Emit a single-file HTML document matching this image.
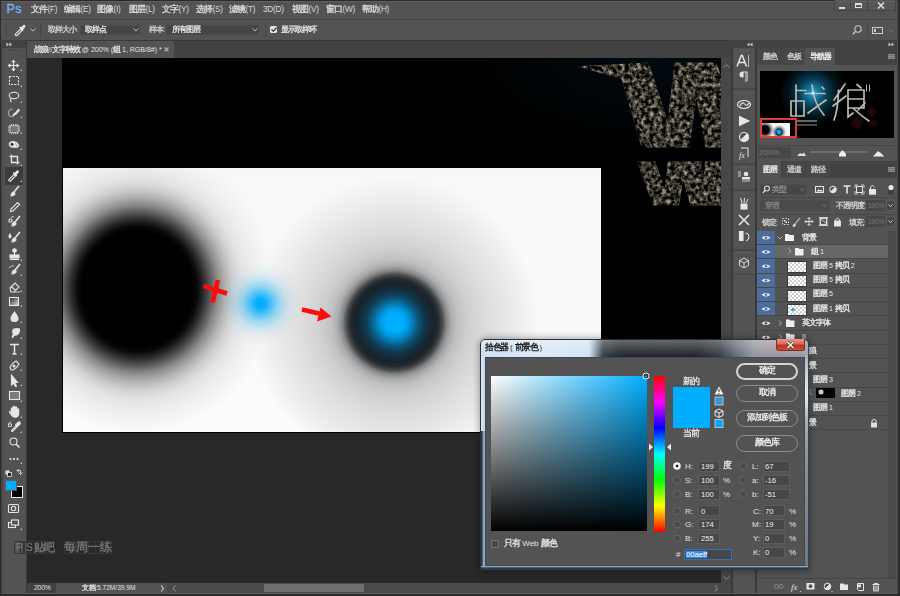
<!DOCTYPE html>
<html><head><meta charset="utf-8">
<style>
*{margin:0;padding:0;box-sizing:border-box}
html,body{width:900px;height:596px;overflow:hidden;background:#282828}
body{position:relative;font-family:"Liberation Sans",sans-serif;font-size:9px;color:#d6d6d6}
.a{position:absolute}
.t{position:absolute;white-space:nowrap;line-height:1}
.m{top:6px;font-size:8.2px;color:#dadada;letter-spacing:-0.2px}
.o{font-size:7px;color:#cfcfcf}
.ig{left:733px;width:22px;background:#535353;position:absolute}
.pt{font-size:7px;color:#cfcfcf}
.lt{font-size:7px;color:#e8e8e8}
.btn{left:736px;width:62px;height:17px;border:1px solid #8c8c8c;border-radius:9px;position:absolute}
.bt{left:736px;width:62px;text-align:center;font-size:8px;color:#eee}
.dl{font-size:8px;color:#e4e4e4}
.dv{font-size:7.7px;color:#eee}
.fld{height:11px;background:#474747;border:1px solid #5c5c5c;position:absolute}
.thb{position:absolute;left:788px;width:18px;height:10px;background:repeating-conic-gradient(#cfcfcf 0 25%,#fff 0 50%) 0 0/4px 4px;outline:1px solid #3a3a3a}
.dd{background:#454545;border:1px solid #4a4a4a}
i{display:inline-block;width:1em;font-style:normal;text-align:center;-webkit-text-stroke:0.3px currentColor;transform:scale(1.12)}
</style></head><body>
<div class="a" style="left:0;top:0;width:900px;height:596px;background:#2b2b2b"></div>
<!-- ===== MENU BAR ===== -->
<div class="a" style="left:1px;top:1px;width:896px;height:18px;background:#535353"></div>
<div class="t" style="left:6.5px;top:3px;font-size:12.5px;color:#72b2ee;letter-spacing:0.3px;-webkit-text-stroke:0.35px #72b2ee">Ps</div>
<div class="t m" style="left:31px"><i>文</i><i>件</i>(F)</div>
<div class="t m" style="left:64px"><i>编</i><i>辑</i>(E)</div>
<div class="t m" style="left:97px"><i>图</i><i>像</i>(I)</div>
<div class="t m" style="left:129px"><i>图</i><i>层</i>(L)</div>
<div class="t m" style="left:162px"><i>文</i><i>字</i>(Y)</div>
<div class="t m" style="left:196px"><i>选</i><i>择</i>(S)</div>
<div class="t m" style="left:229px"><i>滤</i><i>镜</i>(T)</div>
<div class="t m" style="left:263px">3D(D)</div>
<div class="t m" style="left:292px"><i>视</i><i>图</i>(V)</div>
<div class="t m" style="left:326px"><i>窗</i><i>口</i>(W)</div>
<div class="t m" style="left:362px"><i>帮</i><i>助</i>(H)</div>
<!-- window buttons -->
<div class="a" style="left:834px;top:0;width:62px;height:11px;border:1px solid #444;border-top:none;background:#565656"></div>
<div class="a" style="left:850px;top:0;width:1px;height:11px;background:#444"></div>
<div class="a" style="left:867px;top:0;width:1px;height:11px;background:#444"></div>
<div class="a" style="left:839px;top:7px;width:6px;height:2px;background:#ddd"></div>
<div class="a" style="left:855px;top:3px;width:7px;height:5px;border:1px solid #ddd;border-top-width:2px"></div>
<svg class="a" style="left:877px;top:2px" width="8" height="7"><path d="M1 0.5L7 6.5M7 0.5L1 6.5" stroke="#ddd" stroke-width="1.6"/></svg>
<!-- ===== OPTIONS BAR ===== -->
<div class="a" style="left:1px;top:19px;width:896px;height:22px;background:#535353;border-top:1px solid #454545;border-bottom:1px solid #383838"></div>
<div class="a" style="left:1px;top:1px;width:896px;height:1px;background:#5e5e5e"></div>
<div class="a" style="left:6px;top:24px;width:1px;height:12px;background:#474747"></div>
<svg class="a" style="left:14px;top:24px" width="13" height="13" viewBox="0 0 13 13"><path d="M2.3 11.8Q1 11.5 1.3 10.2L6.5 5L8 6.5L2.8 11.7Z" fill="none" stroke="#eee" stroke-width="1.1"/><path d="M6 4.2L8.8 7L9.8 6L9 5.2L10.8 3.4Q12 2.2 11 1.2Q10 0.3 8.8 1.6L7 3.4L6.2 2.6L5.2 3.6Z" fill="#eee"/></svg>
<svg class="a" style="left:30px;top:28px" width="6" height="4"><path d="M0.5 0.5L3 3L5.5 0.5" stroke="#bbb" fill="none"/></svg>
<div class="a" style="left:40px;top:22px;width:1px;height:15px;background:#464646"></div>
<div class="t o" style="left:48px;top:26px"><i>取</i><i>样</i><i>大</i><i>小</i>:</div>
<div class="a dd" style="left:80px;top:25px;width:60px;height:10px"></div>
<div class="t o" style="left:85px;top:26px;color:#e0e0e0"><i>取</i><i>样</i><i>点</i></div>
<svg class="a" style="left:133px;top:28px" width="6" height="4"><path d="M0.5 0.5L3 3L5.5 0.5" stroke="#bbb" fill="none"/></svg>
<div class="t o" style="left:149px;top:26px"><i>样</i><i>本</i>:</div>
<div class="a dd" style="left:166px;top:25px;width:93px;height:10px"></div>
<div class="t o" style="left:172px;top:26px;color:#e0e0e0"><i>所</i><i>有</i><i>图</i><i>层</i></div>
<svg class="a" style="left:252px;top:28px" width="6" height="4"><path d="M0.5 0.5L3 3L5.5 0.5" stroke="#bbb" fill="none"/></svg>
<div class="a" style="left:265px;top:22px;width:1px;height:15px;background:#464646"></div>
<div class="a" style="left:270px;top:26px;width:7px;height:7px;background:#e8e8e8;border-radius:1.5px"></div>
<svg class="a" style="left:271px;top:27px" width="6" height="5"><path d="M0.5 2.5L2.3 4.2L5.5 0.8" stroke="#333" stroke-width="1.3" fill="none"/></svg>
<div class="t o" style="left:281px;top:26px;color:#e0e0e0"><i>显</i><i>示</i><i>取</i><i>样</i><i>环</i></div>
<!-- right of options bar -->
<svg class="a" style="left:852px;top:25px" width="10" height="10" viewBox="0 0 10 10"><circle cx="6" cy="4" r="3.2" fill="none" stroke="#ccc" stroke-width="1.1"/><path d="M3.7 6.3L0.8 9.2" stroke="#ccc" stroke-width="1.3"/></svg>
<div class="a" style="left:867px;top:22px;width:1px;height:15px;background:#464646"></div>
<div class="a" style="left:872px;top:27px;width:11px;height:7px;border:1px solid #ccc"></div>
<div class="a" style="left:874px;top:29px;width:2px;height:3px;background:#ccc"></div>
<svg class="a" style="left:888px;top:29px" width="6" height="4"><path d="M0.5 0.5L3 3L5.5 0.5" stroke="#6a6a6a" fill="none"/></svg>
<!-- ===== TAB BAR ===== -->
<div class="a" style="left:27px;top:41px;width:704px;height:17px;background:#424242"></div>
<div class="a" style="left:27px;top:41px;width:147px;height:17px;background:#535353"></div>
<div class="t" style="left:34px;top:46px;font-size:7px;color:#e4e4e4"><i>战</i><i>狼</i>II<i>文</i><i>字</i><i>特</i><i>效</i> @ 200% (<i>组</i> 1, RGB/8#) *</div>
<svg class="a" style="left:163.5px;top:47px" width="5" height="5"><path d="M0.5 0.5L4.5 4.5M4.5 0.5L0.5 4.5" stroke="#b0b0b0" stroke-width="1.1"/></svg>
<!-- ===== LEFT TOOLBAR ===== -->
<div class="a" style="left:1px;top:40px;width:2px;height:553px;background:#474747"></div>
<div class="a" style="left:3px;top:40px;width:23px;height:553px;background:#535353"></div>
<div class="a" style="left:3px;top:40px;width:23px;height:8px;background:#424242"></div>
<div class="a" style="left:26px;top:40px;width:1px;height:553px;background:#3a3a3a"></div>
<svg class="a" style="left:6px;top:42px" width="7" height="5"><path d="M0.5 0.5L3 2.5L0.5 4.5ZM3.5 0.5L6 2.5L3.5 4.5Z" fill="#ccc"/></svg>
<div class="a" style="left:8px;top:50px;width:13px;height:1px;background:#474747"></div>
<svg class="a" style="left:3px;top:58px" width="23" height="480" viewBox="0 0 23 480">
<g fill="none" stroke="#e6e6e6" stroke-width="1.1">
<!-- move y=65.5 → 7.5 -->
<path d="M10.5 2.5V12.5M5.5 7.5H15.5" />
<path d="M8.8 4.2L10.5 2.5L12.2 4.2M8.8 10.8L10.5 12.5L12.2 10.8M7.2 5.8L5.5 7.5L7.2 9.2M13.8 5.8L15.5 7.5L13.8 9.2" fill="#e6e6e6"/>
<!-- marquee y=81 -->
<rect x="6.5" y="18.5" width="9" height="8" stroke-dasharray="2 1.2"/>
<!-- lasso y=97 -->
<ellipse cx="11" cy="37.5" rx="4.8" ry="3.2"/>
<path d="M8 40.5Q7 43 8.5 44"/>
<!-- quick select y=112 -->
<path d="M9.8 51.2Q5.5 51 5.5 55Q5.5 59 9.5 58.8" stroke="#aaa" stroke-width="1.1"/>
<path d="M16.3 51.2L12 56.5" stroke-width="2.2"/><path d="M12.8 55.6L10.2 58.4L9.8 57.8L11.4 55Z" fill="#e6e6e6" stroke-width="0.8"/>
<!-- chip y=128.5 -->
<rect x="6.8" y="67.6" width="8.6" height="7" fill="#777" stroke-dasharray="1 0.6"/>
<path d="M8.5 66V67M10.5 66V67M12.5 66V67M14 66V67M8.5 75.2V76.2M10.5 75.2V76.2M12.5 75.2V76.2M14 75.2V76.2M5 69H6.2M5 71H6.2M5 73H6.2M16 69H17.2M16 71H17.2M16 73H17.2" stroke-width="0.8"/>
<!-- red eye y=144 -->
<path d="M5.8 87Q5.5 83.5 9.5 83Q12.5 82.8 14.5 84.5Q16.5 86 16.3 88.5Q15.5 90.2 12 89.8Q7.5 90.3 5.8 87Z" fill="#e6e6e6" stroke="none"/>
<circle cx="9" cy="86.3" r="1.5" fill="#333" stroke="none"/>
<path d="M12.5 84.5L14 89.5M14.5 84.8L15.8 88.8" stroke="#999" stroke-width="0.7"/>
<!-- crop y=160 -->
<path d="M8.5 96.5V104.5H16.5M6.5 98.5H14.5V106.5" stroke-width="1.4"/>
</g>
</svg>
<!-- selected eyedropper tool -->
<div class="a" style="left:5px;top:167px;width:18px;height:18px;background:#3c3c3c"></div>
<svg class="a" style="left:3px;top:58px" width="23" height="480" viewBox="0 0 23 480">
<g fill="none" stroke="#e6e6e6" stroke-width="1.1">
<!-- eyedropper y=176 → 118 -->
<g transform="translate(4.5,111.5)"><path d="M2.3 11.8Q1 11.5 1.3 10.2L6.5 5L8 6.5L2.8 11.7Z" fill="none" stroke="#eee" stroke-width="1.1"/><path d="M6 4.2L8.8 7L9.8 6L9 5.2L10.8 3.4Q12 2.2 11 1.2Q10 0.3 8.8 1.6L7 3.4L6.2 2.6L5.2 3.6Z" fill="#eee" stroke="none"/></g>
<!-- brush y=191 → 133 -->
<path d="M16 128L11 134" stroke-width="1.6"/><path d="M8 138Q8 135 10 134Q12 134 12 136Q11 138 8 138Z" fill="#e6e6e6"/>
<!-- pencil y=206 → 148 -->
<path d="M7.5 153.5L8 151L14.5 144.5L16.5 146.5L10 153Z"/>
<!-- mixer brush y=222 → 164 -->
<path d="M17 158L12 164" stroke-width="1.6"/><path d="M9 168Q9 165 11 164Q13 164 13 166Q12 168 9 168Z" fill="#e6e6e6"/>
<rect x="6" y="161" width="3" height="3" rx="1"/>
<path d="M8 160Q9 157 11 159" stroke-width="0.8"/>
<!-- healing y=238 → 180 -->
<path d="M17 174L12 180" stroke-width="1.6"/><path d="M9 184Q9 181 11 180Q13 180 13 182Q12 184 9 184Z" fill="#e6e6e6"/>
<path d="M7 176Q5 179 7 180Q9 179 7 176Z" fill="#e6e6e6"/>
<!-- stamp y=254 → 196 -->
<circle cx="11.5" cy="192.5" r="1.8" fill="#e6e6e6"/><path d="M11.5 194V197"/><rect x="7" y="197" width="9" height="3" fill="#e6e6e6"/><path d="M7 201.5H16"/>
<!-- history brush y=270 → 212 -->
<path d="M17 206L12 212" stroke-width="1.6"/><path d="M9 216Q9 213 11 212Q13 212 13 214Q12 216 9 216Z" fill="#e6e6e6"/>
<path d="M6 210Q8 207 11 208" stroke-width="0.8"/><path d="M15 211L13 215" stroke-width="0.6" stroke-dasharray="1 1"/>
<!-- eraser y=286 → 228 -->
<path d="M7 230L12 225L16 229L11 234H8Z M8.5 228.5L12.5 232.5"/><path d="M11 234H17" stroke-width="0.8"/>
<!-- gradient y=301 → 243 -->
<rect x="6.5" y="239.5" width="9" height="8" fill="url(#gr)" />
<!-- blur drop y=317 → 259 -->
<path d="M11.5 254Q8 258.5 8 260.5Q8 263.5 11.5 263.5Q15 263.5 15 260.5Q15 258.5 11.5 254Z" fill="#e6e6e6"/>
<!-- dodge y=333 → 275 -->
<path d="M9 279L10.5 276Q8.5 273 11 271Q14 270 16.5 271Q17 274 15 276Q13 277.5 11 277L9.5 280" fill="#e6e6e6"/>
<!-- T y=349 → 291 -->
<path d="M7 286.5H16M11.5 286.5V296M9.5 296H13.5" stroke-width="1.5"/>
<!-- pen y=365 → 307 -->
<path d="M8 312L7 309Q9 305 13 303L16 306Q14 310 10 312Z"/><circle cx="11" cy="308" r="1" fill="#e6e6e6"/>
<!-- arrow y=380 → 322 -->
<path d="M8.5 317V327L10.5 325L12.5 328.5L13.5 328L11.5 324.5L14.5 324.5Z" fill="#e6e6e6"/>
<!-- rectangle y=395.5 → 337.5 -->
<rect x="6.5" y="333.5" width="10" height="8" fill="#7a7a7a"/>
<!-- hand y=412 → 354 -->
<path d="M8 355V350.5Q8 349.5 9 349.5Q10 349.5 10 350.5V354V349Q10 348 11 348Q12 348 12 349V354V349.5Q12 348.5 13 348.5Q14 348.5 14 349.5V354.5V351.5Q14 350.5 15 350.5Q16 350.5 16 351.5V356Q16 359.5 12 359.5Q9.5 359.5 8 357L6 354Q6 353 7 353Z" fill="#e6e6e6" stroke-width="0.5"/>
<!-- 3D / eyedropper y=427 → 369 -->
<path d="M9 373.5L8.5 372.5L13 368L14 369L9.5 373.5Z"/>
<path d="M12.5 367L15 364.5Q16.2 363.5 17 364.3Q17.8 365.2 16.8 366.3L14.2 368.8Z" fill="#e6e6e6"/>
<path d="M6 366Q6 364 8 364" stroke-width="0.8"/><rect x="5.5" y="366" width="3" height="2.5" stroke-width="0.8"/>
<!-- zoom y=443 → 385 -->
<circle cx="10.5" cy="383.5" r="3.5"/><path d="M13 386L16.5 389.5" stroke-width="1.6"/>
<!-- dots y=459 → 401 -->
<circle cx="7.5" cy="401" r="1.1" fill="#e6e6e6" stroke="none"/><circle cx="11" cy="401" r="1.1" fill="#e6e6e6" stroke="none"/><circle cx="14.5" cy="401" r="1.1" fill="#e6e6e6" stroke="none"/>
<!-- small swatch icons y=473 → 415 -->
<rect x="2.5" y="412.5" width="4" height="4" fill="#e6e6e6" stroke="none"/><rect x="4.5" y="414.5" width="4" height="4" fill="#222" stroke="#e6e6e6" stroke-width="0.8"/>
<path d="M14 412.5H17.5V416M15.5 414.5L17.5 416.5L19.5 414.5M14 412.5L15.5 411M14 412.5L15.5 414" stroke-width="0.8"/>
<!-- quick mask y=508 → 450 -->
<rect x="5.5" y="446.5" width="10" height="8" rx="1"/><circle cx="10.5" cy="450.5" r="2.2"/>
<!-- screen mode y=524 → 466 -->
<rect x="5.5" y="464.5" width="7" height="5"/><rect x="8.5" y="462" width="7" height="5" fill="#535353"/>
</g>
<defs><linearGradient id="gr" x1="0" y1="0" x2="1" y2="1"><stop offset="0" stop-color="#222"/><stop offset="1" stop-color="#ddd"/></linearGradient></defs>
<!-- tiny triangles -->
<g fill="#bbb">
<path d="M19 13L19 11L17 13Z"/><path d="M19 29L19 27L17 29Z"/><path d="M19 45L19 43L17 45Z"/><path d="M19 60L19 58L17 60Z"/>
<path d="M19 76L19 74L17 76Z"/><path d="M19 92L19 90L17 92Z"/><path d="M19 108L19 106L17 108Z"/><path d="M19 124L19 122L17 124Z"/>
<path d="M19 203L19 201L17 203Z"/><path d="M19 218L19 216L17 218Z"/><path d="M19 234L19 232L17 234Z"/><path d="M19 249L19 247L17 249Z"/>
<path d="M19 265L19 263L17 265Z"/><path d="M19 281L19 279L17 281Z"/><path d="M19 297L19 295L17 297Z"/><path d="M19 313L19 311L17 313Z"/>
<path d="M19 328L19 326L17 328Z"/><path d="M19 344L19 342L17 344Z"/><path d="M19 360L19 358L17 360Z"/><path d="M19 375L19 373L17 375Z"/>
<path d="M19 406L19 404L17 406Z"/><path d="M19 472L19 470L17 472Z"/>
</g>
</svg>
<!-- FG/BG colors -->
<div class="a" style="left:11px;top:486px;width:12px;height:12px;background:#000;border:1px solid #e8e8e8"></div>
<div class="a" style="left:5px;top:480px;width:12px;height:11px;background:#00aeff;border:1px solid #6a5a50"></div>
<!-- ===== CANVAS ===== -->
<div class="a" style="left:27px;top:58px;width:694px;height:525px;background:#282828"></div>
<div class="a" style="left:62px;top:58px;width:659px;height:375px;background:#000"></div>
<div class="a" style="left:63px;top:168px;width:538px;height:264px;overflow:hidden;
background:
radial-gradient(circle at 197.5px 135.5px, rgba(0,170,255,1) 0px, rgba(0,172,255,0.95) 5px, rgba(10,175,252,0.7) 11px, rgba(40,180,248,0.42) 18px, rgba(80,190,240,0.2) 26px, rgba(120,200,240,0.07) 34px, rgba(140,205,240,0) 42px),
radial-gradient(150px 158px at 74.5px 121px, #000 0.0%, #000 36.7%, #0a0a0a 40.0%, #2a2a2a 44.0%, #5a5a5a 48.7%, #8a8a8a 53.3%, #b2b2b2 58.7%, #d0d0d0 64.0%, #e3e3e3 70.0%, #eeeeee 78.0%, rgba(246,246,246,0) 92.0%),
radial-gradient(circle at 331.5px 154.5px, #00aeff 0px, #00aeff 9px, #009ae2 14px, #0678ad 19px, #0b5578 24px, #0f3b53 29px, #142c3b 34px, #192329 40px, #262a2e 44px, #4a4d50 48px, #858687 52px, #abacad 57px, #c0c0c0 63px, #cdcdcd 72px, #d6d6d6 82px, #dedede 95px, #e6e6e6 110px, #eeeeee 125px, rgba(248,248,248,0) 145px),
linear-gradient(#f8f8f8,#fbfbfb)"></div>
<!-- red cross & arrow -->
<svg class="a" style="left:195px;top:270px" width="150" height="60" viewBox="0 0 150 60">
<path d="M8.5 16L32 23.5M23 10L17.5 32.5" stroke="#ff0a0a" stroke-width="4.6" fill="none"/>
<path d="M107 39.5L124 43.5" stroke="#ff0a0a" stroke-width="4.5"/>
<path d="M136.5 46.5L122 51.5L125.5 37.5Z" fill="#ff0a0a"/>
</svg>
<!-- textured W letters -->
<div class="a" style="left:420px;top:58px;width:301px;height:110px;background:radial-gradient(ellipse 200px 90px at 240px 0px,rgba(0,35,50,0.3),rgba(0,0,0,0))"></div>
<svg class="a" style="left:570px;top:58px" width="151" height="154" viewBox="570 58 151 154">
<defs>
<filter id="tex" x="0" y="0" width="100%" height="100%" color-interpolation-filters="sRGB">
<feTurbulence type="fractalNoise" baseFrequency="0.24" numOctaves="3" seed="11" result="n"/>
<feColorMatrix in="n" type="matrix" values="0 0 0 1.35 -0.45  0 0 0 1.323 -0.45  0 0 0 1.242 -0.441  0 0 0 0 1" result="c"/>
<feComposite in="c" in2="SourceGraphic" operator="in"/>
</filter>
<clipPath id="w1"><path d="M577.5 66.3L648.5 62.6L667.5 120L674.8 62.6L716.4 62.6L721 76L721 147.5L705.6 147.5L696.4 97.4L689.4 147.5L641.6 147.5L621.6 79Z"/><path d="M637.2 161.6L655 161.6L664.8 188.7L667.8 161.6L701.6 161.6L703 180L705 161.6L721 161.6L721 205.6L690.3 205.6L683.2 179.5L679 205.6L653 205.6Z"/></clipPath>
</defs>
<g clip-path="url(#w1)">
<rect x="570" y="58" width="151" height="154" fill="#222"/>
<rect x="570" y="58" width="151" height="154" fill="#fff" filter="url(#tex)"/>
</g>
</svg>
<!-- vertical scrollbar -->
<div class="a" style="left:721px;top:58px;width:10px;height:525px;background:#474747"></div>
<svg class="a" style="left:723px;top:64px" width="7" height="4"><path d="M0.5 3.5L3.5 0.5L6.5 3.5" stroke="#8a8a8a" fill="none"/></svg>
<!-- watermark -->
<div class="a" style="left:14.0px;top:541px;width:10.3px;height:13px;border:1px solid #363636;background:linear-gradient(90deg,transparent 4.6px,#2f2f2f 4.6px 5.6px,transparent 5.6px),linear-gradient(transparent 5.5px,#2f2f2f 5.5px 6.5px,transparent 6.5px)"></div>
<div class="a" style="left:24.3px;top:541px;width:10.3px;height:13px;border:1px solid #363636;background:linear-gradient(90deg,transparent 4.6px,#2f2f2f 4.6px 5.6px,transparent 5.6px),linear-gradient(transparent 5.5px,#2f2f2f 5.5px 6.5px,transparent 6.5px)"></div>
<div class="a" style="left:34.6px;top:541px;width:10.3px;height:13px;border:1px solid #363636;background:linear-gradient(90deg,transparent 4.6px,#2f2f2f 4.6px 5.6px,transparent 5.6px),linear-gradient(transparent 5.5px,#2f2f2f 5.5px 6.5px,transparent 6.5px)"></div>
<div class="a" style="left:44.9px;top:541px;width:10.3px;height:13px;border:1px solid #363636;background:linear-gradient(90deg,transparent 4.6px,#2f2f2f 4.6px 5.6px,transparent 5.6px),linear-gradient(transparent 5.5px,#2f2f2f 5.5px 6.5px,transparent 6.5px)"></div>
<div class="a" style="left:64.0px;top:541px;width:12px;height:13px;border:1px solid #363636;background:linear-gradient(90deg,transparent 5.5px,#2f2f2f 5.5px 6.5px,transparent 6.5px),linear-gradient(transparent 5.5px,#2f2f2f 5.5px 6.5px,transparent 6.5px)"></div>
<div class="a" style="left:76.0px;top:541px;width:12px;height:13px;border:1px solid #363636;background:linear-gradient(90deg,transparent 5.5px,#2f2f2f 5.5px 6.5px,transparent 6.5px),linear-gradient(transparent 5.5px,#2f2f2f 5.5px 6.5px,transparent 6.5px)"></div>
<div class="a" style="left:88.0px;top:541px;width:12px;height:13px;border:1px solid #363636;background:linear-gradient(90deg,transparent 5.5px,#2f2f2f 5.5px 6.5px,transparent 6.5px),linear-gradient(transparent 5.5px,#2f2f2f 5.5px 6.5px,transparent 6.5px)"></div>
<div class="a" style="left:100.0px;top:541px;width:12px;height:13px;border:1px solid #363636;background:linear-gradient(90deg,transparent 5.5px,#2f2f2f 5.5px 6.5px,transparent 6.5px),linear-gradient(transparent 5.5px,#2f2f2f 5.5px 6.5px,transparent 6.5px)"></div>
<div class="t" style="left:14px;top:543px;width:10.3px;text-align:center;font-size:10px;color:#7a7a7a">P</div>
<div class="t" style="left:24.3px;top:543px;width:10.3px;text-align:center;font-size:10px;color:#7a7a7a">S</div>
<div class="t" style="left:34.6px;top:543px;width:10.3px;text-align:center;font-size:10px;color:#7a7a7a"><i>贴</i></div>
<div class="t" style="left:44.9px;top:543px;width:10.3px;text-align:center;font-size:10px;color:#7a7a7a"><i>吧</i></div>
<div class="t" style="left:64px;top:542px;width:12px;text-align:center;font-size:10.5px;color:#7a7a7a"><i>每</i></div>
<div class="t" style="left:76px;top:542px;width:12px;text-align:center;font-size:10.5px;color:#7a7a7a"><i>周</i></div>
<div class="t" style="left:88px;top:542px;width:12px;text-align:center;font-size:10.5px;color:#7a7a7a"><i>一</i></div>
<div class="t" style="left:100px;top:542px;width:12px;text-align:center;font-size:10.5px;color:#7a7a7a"><i>练</i></div>

<!-- status bar -->
<div class="a" style="left:27px;top:583px;width:694px;height:10px;background:#4a4a4a"></div>
<div class="a" style="left:27px;top:583px;width:29px;height:10px;background:#424242"></div>
<div class="t" style="left:34px;top:585px;font-size:6.8px;color:#e0e0e0;letter-spacing:-0.2px">200%</div>
<div class="a" style="left:56px;top:583px;width:111px;height:10px;background:#535353"></div>
<div class="t" style="left:82px;top:585px;font-size:6.6px;color:#e0e0e0"><i>文</i><i>档</i>:5.72M/39.9M</div>
<svg class="a" style="left:160px;top:585px" width="5" height="7"><path d="M1 0.5L3.5 3.5L1 6.5" stroke="#ccc" fill="none" stroke-width="1.1"/></svg>
<svg class="a" style="left:172px;top:585px" width="5" height="7"><path d="M3.5 0.5L1 3.5L3.5 6.5" stroke="#999" fill="none"/></svg>
<div class="a" style="left:264px;top:584px;width:100px;height:8px;background:#6e6e6e"></div>
<svg class="a" style="left:714px;top:585px" width="5" height="7"><path d="M1 0.5L3.5 3.5L1 6.5" stroke="#999" fill="none"/></svg>
<div class="a" style="left:721px;top:583px;width:10px;height:10px;background:#474747"></div>
<svg class="a" style="left:723px;top:576px" width="7" height="4"><path d="M0.5 0.5L3.5 3.5L6.5 0.5" stroke="#8a8a8a" fill="none"/></svg>
<div class="a" style="left:1px;top:593px;width:896px;height:1px;background:#5a5a5a"></div>
<!-- ===== RIGHT DOCK ===== -->
<div class="a" style="left:731px;top:40px;width:166px;height:553px;background:#3a3a3a"></div>
<div class="a" style="left:897px;top:0px;width:1px;height:594px;background:#4a4a4a"></div>
<div class="a" style="left:731px;top:40px;width:166px;height:8px;background:#424242"></div>
<svg class="a" style="left:746px;top:42px" width="7" height="5"><path d="M6.5 0.5L4 2.5L6.5 4.5ZM3.5 0.5L1 2.5L3.5 4.5Z" fill="#ccc"/></svg>
<svg class="a" style="left:888px;top:42px" width="7" height="5"><path d="M0.5 0.5L3 2.5L0.5 4.5ZM3.5 0.5L6 2.5L3.5 4.5Z" fill="#ccc"/></svg>
<!-- icon column -->
<div class="a" style="left:733px;top:48px;width:22px;height:545px;background:#474747"></div>
<div class="a ig" style="top:48px;height:40px"></div>
<div class="a ig" style="top:90px;height:73px"></div>
<div class="a ig" style="top:165px;height:24px"></div>
<div class="a ig" style="top:191px;height:58px"></div>
<div class="a ig" style="top:251px;height:23px"></div>
<div class="a" style="left:733px;top:275px;width:22px;height:318px;background:#535353"></div>
<svg class="a" style="left:733px;top:48px" width="22" height="230" viewBox="0 0 22 230">
<g fill="#e6e6e6" stroke="none">
<rect x="6" y="2" width="10" height="1" fill="#5f5f5f"/><rect x="6" y="44" width="10" height="1" fill="#5f5f5f"/>
<rect x="6" y="119" width="10" height="1" fill="#5f5f5f"/><rect x="6" y="145" width="10" height="1" fill="#5f5f5f"/><rect x="6" y="204" width="10" height="1" fill="#5f5f5f"/>
</g>
<g fill="none" stroke="#e6e6e6" stroke-width="1.1">
<!-- A| y61 → 13 -->
<path d="M4 18.5L8.2 7.5H9.3L13.5 18.5M5.6 14.5H11.9" stroke-width="1.5"/><path d="M15.5 7V19" stroke="#bbb" stroke-width="1"/>
<!-- pilcrow y76 → 28 -->
<path d="M10 24H14V33" /><path d="M10 24Q7 24 7 26.5Q7 29 10 29V24" fill="#e6e6e6"/><rect x="12" y="25" width="2" height="9" fill="#999" stroke="none"/>
<!-- cloud y104 → 56 -->
<ellipse cx="11" cy="56.5" rx="6.5" ry="4" stroke-width="1.2"/><path d="M7 58Q9 53 11.5 56Q14 59 16 55"/>
<!-- play y121 → 73 -->
<path d="M6.5 68.5L16 73L6.5 77.5Z" fill="#e6e6e6"/>
<!-- half circle y137 → 89 -->
<circle cx="11" cy="89" r="4.5" stroke-width="1.2"/><path d="M14.2 85.8L7.8 92.2A4.5 4.5 0 0 0 14.2 85.8Z" fill="#e6e6e6"/>
<!-- fx y153 → 105 -->
<path d="M8 100H15V109" stroke-width="1"/><text x="6" y="110" font-size="8" font-style="italic" fill="#e6e6e6" stroke="none" font-family="Liberation Serif">fx</text>
<!-- stamp y176 → 128 -->
<path d="M5 124H8M5 126H8M5 128H8" stroke-width="0.8"/><circle cx="13" cy="126" r="1.8" fill="#e6e6e6"/><rect x="9" y="129" width="8" height="2.5" fill="#e6e6e6" stroke="none"/><path d="M9 133H17" stroke-width="0.8"/>
<!-- brushes y204 → 156 -->
<rect x="7.5" y="155.5" width="7" height="6" fill="#e6e6e6" stroke="none"/><path d="M9 155L7.5 150M11 155L11.5 150M13 155L15 151" stroke-width="1"/>
<!-- tools y220 → 172 -->
<path d="M6 167L16 177M16 167L6 177" stroke-width="1.6"/>
<!-- history y236 → 188 -->
<rect x="6.5" y="183.5" width="3.5" height="9" fill="#e6e6e6"/><path d="M12.5 185Q16 185 16 189Q16 192 13 193" stroke-width="1"/>
<!-- cube y263 → 215 -->
<path d="M11 210L15.5 212.5V217.5L11 220L6.5 217.5V212.5ZM6.5 212.5L11 215L15.5 212.5M11 215V220" stroke-width="0.9"/>
</g>
</svg>
<!-- panel column bg -->
<div class="a" style="left:757px;top:48px;width:140px;height:545px;background:#535353"></div>
<!-- Navigator tabs -->
<div class="a" style="left:757px;top:48px;width:140px;height:17px;background:#424242"></div>
<div class="a" style="left:757px;top:48px;width:23px;height:17px;background:#474747"></div>
<div class="a" style="left:781px;top:48px;width:24px;height:17px;background:#474747"></div>
<div class="a" style="left:805px;top:48px;width:30px;height:17px;background:#535353"></div>
<div class="t pt" style="left:763px;top:53px"><i>颜</i><i>色</i></div>
<div class="t pt" style="left:787px;top:53px"><i>色</i><i>板</i></div>
<div class="t pt" style="left:810px;top:53px;color:#f0f0f0"><i>导</i><i>航</i><i>器</i></div>
<div class="a" style="left:888px;top:54px;width:7px;height:5px;background:repeating-linear-gradient(#8a8a8a 0 1px,#727272 1px 2px)"></div>
<!-- navigator content -->
<div class="a" style="left:760px;top:71px;width:134px;height:67px;background:
radial-gradient(circle at 53px 22px, rgba(40,190,240,0.95) 0px, rgba(20,140,190,0.85) 6px, rgba(10,95,130,0.65) 14px, rgba(5,50,70,0.4) 24px, rgba(0,0,0,0) 34px), #000"></div>
<svg class="a" style="left:760px;top:71px" width="134" height="67" viewBox="760 71 134 67">
<g fill="none" stroke="#bdb9aa" stroke-width="1.7" stroke-linecap="round">
<path d="M796 85V116M796 90.5H806M791 101H804V116H791Z"/>
<path d="M805 93.5H825M812 85Q814 104 824 115M808 113L826 100M822 87L824 89"/>
<path d="M845 84L834 100M838.5 90Q838 110 834 120M833 106L846 96"/>
<path d="M857 84.5L861 88M848 90H864V108H848ZM848 99H864M848 108V117L853 113M853 108Q859 114 869 121M865 103L858 110"/>
<path d="M866.5 85V91M869.5 85V91" stroke-width="1"/>
</g>
<circle cx="813" cy="93" r="1.5" fill="#cfefff"/>
</svg>
<div class="a" style="left:852px;top:118px;width:10px;height:10px;background:#220505;transform:rotate(30deg)"></div>
<div class="a" style="left:868px;top:108px;width:8px;height:8px;background:#220505;transform:rotate(40deg)"></div>
<div class="a" style="left:870px;top:120px;width:7px;height:7px;background:#200404;transform:rotate(20deg)"></div>
<div class="a" style="left:794px;top:120px;width:23px;height:2px;background:#6a6860"></div>
<div class="a" style="left:794px;top:124px;width:23px;height:2px;background:#4a4842"></div>
<div class="a" style="left:760px;top:118px;width:37px;height:20px;background:#000;border:2px solid #e23a3a"></div>
<div class="a" style="left:762px;top:123px;width:28px;height:13px;background:radial-gradient(circle at 3px 7px,#000 0,#000 4px,#888 6px,rgba(255,255,255,0) 9px),radial-gradient(circle at 17px 9px,#00aeff 0,#00aeff 1.5px,#0b3045 3px,rgba(80,80,80,0.6) 4.5px,rgba(255,255,255,0) 7px),#f4f4f4"></div>
<div class="a" style="left:771px;top:129px;width:3px;height:2px;background:#6cf"></div>
<div class="a" style="left:775px;top:130px;width:2px;height:1px;background:#f44"></div>
<!-- zoom row -->
<div class="a" style="left:757px;top:145px;width:140px;height:1px;background:#474747"></div>
<div class="a" style="left:758px;top:147px;width:33px;height:11px;background:#474747"></div>
<div class="t" style="left:759px;top:149px;font-size:8px;color:#7a7a7a">200%</div>
<svg class="a" style="left:796px;top:149px" width="90" height="9"><path d="M1 7L4 4L6 5L8 3.5L10 7Z" fill="#ddd"/><rect x="14" y="2" width="57" height="2" fill="#6e6e6e"/><path d="M43 5L46.5 1L50 5V7.5H43Z" fill="#eee"/><path d="M77 7.5L82 2L86 5L88 7.5Z" fill="#eee"/></svg>
<!-- Layers tabs -->
<div class="a" style="left:757px;top:161px;width:140px;height:17px;background:#424242"></div>
<div class="a" style="left:757px;top:161px;width:24px;height:17px;background:#535353"></div>
<div class="a" style="left:782px;top:161px;width:23px;height:17px;background:#474747"></div>
<div class="a" style="left:806px;top:161px;width:24px;height:17px;background:#474747"></div>
<div class="t pt" style="left:763px;top:166px;color:#f0f0f0"><i>图</i><i>层</i></div>
<div class="t pt" style="left:787px;top:166px"><i>通</i><i>道</i></div>
<div class="t pt" style="left:811px;top:166px"><i>路</i><i>径</i></div>
<div class="a" style="left:888px;top:167px;width:7px;height:5px;background:repeating-linear-gradient(#8a8a8a 0 1px,#727272 1px 2px)"></div>
<!-- filter row -->
<div class="a" style="left:760px;top:184px;width:47px;height:11px;background:#474747;border:1px solid #4c4c4c"></div>
<svg class="a" style="left:762px;top:185px" width="8" height="9"><circle cx="5" cy="3.5" r="2.5" fill="none" stroke="#ddd" stroke-width="1.1"/><path d="M3.2 5.3L0.8 8" stroke="#ddd" stroke-width="1.3"/></svg>
<div class="t pt" style="left:772px;top:186px;color:#8a8a8a"><i>类</i><i>型</i></div>
<svg class="a" style="left:800px;top:188px" width="5" height="3"><path d="M0.5 0.5L2.5 2.5L4.5 0.5" stroke="#777" fill="none"/></svg>
<svg class="a" style="left:813px;top:184px" width="84" height="12" viewBox="0 0 84 12">
<g fill="none" stroke="#e6e6e6" stroke-width="1">
<rect x="2.5" y="2.5" width="8" height="6"/><path d="M4 7.5L5.5 5.5L7 7L8 6L9.5 7.5" fill="#e6e6e6"/>
<circle cx="20" cy="5.5" r="3.3"/><path d="M22.3 3.2L17.7 7.8A3.3 3.3 0 0 0 22.3 3.2Z" fill="#e6e6e6"/>
<path d="M30.5 2H37.5M34 2V9.5" stroke-width="1.6"/>
<rect x="43.5" y="2.5" width="6" height="6"/><path d="M42 1H45M42 1V4M51 1H48M51 1V4M42 10H45M42 10V7M51 10H48M51 10V7" stroke-width="0.8"/>
<path d="M56.5 5.5V10H62.5V5.5ZM57.5 5V3Q59.5 0 61.5 3" /><rect x="56.5" y="6" width="6" height="4" fill="#e6e6e6"/>
</g>
<rect x="75" y="1" width="6" height="10" rx="3" fill="#3e3e3e"/><circle cx="78" cy="3.5" r="2.6" fill="#eee"/>
</svg>
<div class="a" style="left:757px;top:197px;width:140px;height:1px;background:#474747"></div>
<!-- blend row -->
<div class="a" style="left:760px;top:200px;width:70px;height:11px;background:#4a4a4a;border:1px solid #4c4c4c"></div>
<div class="t pt" style="left:765px;top:202px;color:#808080"><i>穿</i><i>透</i></div>
<svg class="a" style="left:822px;top:204px" width="5" height="3"><path d="M0.5 0.5L2.5 2.5L4.5 0.5" stroke="#777" fill="none"/></svg>
<div class="t pt" style="left:836px;top:202px"><i>不</i><i>透</i><i>明</i><i>度</i>:</div>
<div class="a" style="left:866px;top:200px;width:19px;height:11px;background:#474747"></div>
<div class="t" style="left:868px;top:203px;font-size:6.5px;color:#777">100%</div>
<div class="a" style="left:886px;top:200px;width:9px;height:11px;background:#474747;border:1px solid #5a5a5a"></div>
<svg class="a" style="left:888px;top:204px" width="5" height="3"><path d="M0.5 0.5L2.5 2.5L4.5 0.5" stroke="#ccc" fill="none"/></svg>
<div class="a" style="left:757px;top:214px;width:140px;height:1px;background:#474747"></div>
<!-- lock row -->
<div class="t pt" style="left:762px;top:219px"><i>锁</i><i>定</i>:</div>
<svg class="a" style="left:780px;top:216px" width="70" height="12" viewBox="0 0 70 12">
<g fill="none" stroke="#e6e6e6" stroke-width="0.9">
<rect x="2.5" y="2.5" width="6" height="6" stroke-dasharray="1.5 1.5"/><rect x="4" y="4" width="1.5" height="1.5" fill="#e6e6e6" stroke="none"/><rect x="5.5" y="5.5" width="1.5" height="1.5" fill="#e6e6e6" stroke="none"/>
<path d="M20 2L15 8" stroke-width="1.3" stroke="#aaa"/><path d="M13 10.5Q13 8 15 8Q16 9 15 10Z" fill="#aaa"/>
<path d="M29 1.5V9.5M25 5.5H33M27.5 3L29 1.5L30.5 3M27.5 8L29 9.5L30.5 8M26.5 4L25 5.5L26.5 7M31.5 4L33 5.5L31.5 7"/>
<rect x="40.5" y="2.5" width="6" height="6"/><path d="M39 1.5H48M39 9.5H48M40 1V10M47 1V10" stroke-width="0.8"/><path d="M41 3L47 8" stroke-width="0.8"/>
<rect x="54.5" y="5" width="6" height="5" fill="#e6e6e6"/><path d="M55.5 5V3.5Q57.5 0.5 59.5 3.5V5"/>
</g>
</svg>
<div class="t pt" style="left:849px;top:219px"><i>填</i><i>充</i>:</div>
<div class="a" style="left:866px;top:216px;width:19px;height:11px;background:#474747"></div>
<div class="t" style="left:868px;top:219px;font-size:6.5px;color:#777">100%</div>
<div class="a" style="left:886px;top:216px;width:9px;height:11px;background:#474747;border:1px solid #5a5a5a"></div>
<svg class="a" style="left:888px;top:220px" width="5" height="3"><path d="M0.5 0.5L2.5 2.5L4.5 0.5" stroke="#ccc" fill="none"/></svg>
<!-- layers list -->
<div class="a" style="left:757px;top:231px;width:131px;height:347px;background:#535353"></div>
<div class="a" style="left:888px;top:231px;width:8px;height:347px;background:#4a4a4a"></div>
<div class="a" style="left:757px;top:231px;width:131px;height:200px;background:repeating-linear-gradient(#535353 0 13.25px,#474747 13.25px 14.25px)"></div>
<div class="a" style="left:775px;top:245px;width:113px;height:13px;background:#676767"></div>
<div class="a" style="left:757px;top:231px;width:18px;height:85px;background:repeating-linear-gradient(#4d6e9d 0 13.25px,#474747 13.25px 14.25px)"></div>
<svg class="a" style="left:757px;top:231px" width="18" height="200" viewBox="0 0 18 200">
<defs><g id="eye"><path d="M-4.5 0Q0 -3.5 4.5 0Q0 3.5 -4.5 0Z" fill="#f0f0f0"/><circle cx="0" cy="0" r="1.3" fill="#4d6e9d"/></g></defs>
<use href="#eye" x="9" y="6.8"/><use href="#eye" x="9" y="21"/><use href="#eye" x="9" y="35.3"/><use href="#eye" x="9" y="49.5"/><use href="#eye" x="9" y="63.8"/><use href="#eye" x="9" y="78"/>
<g><path d="M4.5 92.3Q9 88.8 13.5 92.3Q9 95.8 4.5 92.3Z" fill="#f0f0f0"/><circle cx="9" cy="92.3" r="1.3" fill="#535353"/></g>
<g><path d="M4.5 106.5Q9 103 13.5 106.5Q9 110 4.5 106.5Z" fill="#f0f0f0"/><circle cx="9" cy="106.5" r="1.3" fill="#535353"/></g>
</svg>
<svg class="a" style="left:775px;top:231px" width="113" height="200" viewBox="0 0 113 200">
<g fill="none" stroke="#bbb" stroke-width="0.9">
<path d="M2.5 5.5L5 8L7.5 5.5"/>
<path d="M13.5 17.5L16 20L13.5 22.5"/>
<path d="M4 89.5L6.5 92L4 94.5"/>
<path d="M4 103.5L6.5 106L4 108.5"/>
</g>
<g fill="#f0f0f0">
<path d="M10 3H13.5L14.5 4H19V10H10Z"/>
<path d="M20 17H23.5L24.5 18H28.5V24.5H20Z"/>
<path d="M11 88.5H14.5L15.5 89.5H19.5V96H11Z"/>
<path d="M11 102.5H14.5L15.5 103.5H19.5V108H11Z"/>
</g>

<circle cx="18" cy="77.5" r="1.5" fill="#2aa6e0"/>
<rect x="41" y="157" width="19" height="10" fill="#000"/><circle cx="46" cy="161" r="2.5" fill="#ccc"/>
<path d="M36.5 158Q34.5 159 35 162Q36 165 37 163" stroke="#aaa" fill="none" stroke-width="0.8"/>
<path d="M97 191.5V189.5Q99 187 101 189.5V191.5" stroke="#ddd" fill="none" stroke-width="1"/><rect x="96" y="191.5" width="6" height="5" fill="#ddd"/>
</g>
</svg>
<div class="a thb" style="top:262px"></div>
<div class="a thb" style="top:276.3px"></div>
<div class="a thb" style="top:290.5px"></div>
<div class="a thb" style="top:304.8px"></div>
<div class="a" style="left:791px;top:307.5px;width:4px;height:3px;border-radius:50%;background:#2aa6e0"></div>
<div class="t lt" style="left:802px;top:234px"><i>背</i><i>景</i></div>
<div class="t lt" style="left:811px;top:248px"><i>组</i> 1</div>
<div class="t lt" style="left:813px;top:262px"><i>图</i><i>层</i> 5 <i>拷</i><i>贝</i> 2</div>
<div class="t lt" style="left:813px;top:276px"><i>图</i><i>层</i> 5 <i>拷</i><i>贝</i></div>
<div class="t lt" style="left:813px;top:290px"><i>图</i><i>层</i> 5</div>
<div class="t lt" style="left:813px;top:305px"><i>图</i><i>层</i> 1 <i>拷</i><i>贝</i></div>
<div class="t lt" style="left:802px;top:319px"><i>英</i><i>文</i><i>字</i><i>体</i></div>
<div class="t lt" style="left:802px;top:333px">II</div>
<div class="t lt" style="left:802px;top:347px"><i>战</i><i>狼</i></div>
<div class="t lt" style="left:802px;top:362px"><i>背</i><i>景</i></div>
<div class="t lt" style="left:813px;top:376px"><i>图</i><i>层</i> 3</div>
<div class="t lt" style="left:841px;top:390px"><i>图</i><i>层</i> 2</div>
<div class="t lt" style="left:813px;top:404px"><i>图</i><i>层</i> 1</div>
<div class="t lt" style="left:802px;top:419px"><i>背</i><i>景</i></div>
<!-- layers bottom bar -->
<div class="a" style="left:757px;top:578px;width:140px;height:1px;background:#474747"></div>
<svg class="a" style="left:770px;top:580px" width="120" height="13" viewBox="0 0 120 13">
<g fill="none" stroke="#e6e6e6" stroke-width="1">
<g stroke="#8a8a8a"><circle cx="6.5" cy="6.5" r="2"/><circle cx="11" cy="6.5" r="2"/></g>
<text x="21" y="10" font-size="9" font-style="italic" fill="#e6e6e6" stroke="none" font-family="Liberation Serif">fx</text><path d="M29.5 12L30.5 11L31.5 12Z" fill="#ddd" stroke="none"/>
<rect x="36.5" y="3" width="8" height="6.5" fill="#e6e6e6" stroke="none"/><circle cx="40.5" cy="6.2" r="1.9" fill="#535353" stroke="none"/>
<circle cx="57.5" cy="6.5" r="3.3"/><path d="M59.8 4.2L55.2 8.8A3.3 3.3 0 0 0 59.8 4.2Z" fill="#e6e6e6"/><path d="M61 12L62 11L63 12Z" fill="#ddd" stroke="none"/>
<path d="M70 3.5H73.5L74.5 4.5H78V10H70Z" fill="#e6e6e6" stroke="none"/>
<path d="M87.5 3.5H93.5V10.5H88.5L87.5 9.5Z"/><path d="M88.5 4.5V7H90.5V4.5" fill="#e6e6e6" stroke-width="0.8"/>
<path d="M102.5 4.5H109.5M104.5 4.5V3.5H107.5V4.5" /><path d="M103.5 5.5V11H108.5V5.5" fill="#999" stroke="#ccc"/>
</g>
</svg>
<!-- ===== COLOR PICKER DIALOG ===== -->
<div class="a" style="left:480px;top:339px;width:329px;height:231px;border-radius:6px 6px 3px 3px;box-shadow:0 0 7px 1px rgba(0,0,0,0.35)"></div>
<div class="a" style="left:480px;top:339px;width:329px;height:231px;border-radius:5px 5px 3px 3px;overflow:hidden;border:1px solid #2a3036;
background:linear-gradient(90deg,#c9dcee 0px,#d8e7f5 60px,#cfe1f2 108px,#8a9cac 114px,#2a3139 122px,#14181d 140px,#12161a 215px,#2a2f35 238px,#5d6470 256px,#8a8c98 272px,#9a8e98 285px,#8e96a0 329px)">
</div>
<!-- glass highlights -->
<div class="a" style="left:481px;top:340px;width:327px;height:17px;border-radius:4px 4px 0 0;background:linear-gradient(rgba(255,255,255,0.35),rgba(255,255,255,0.05))"></div>
<!-- left/right/bottom frame over dark -->
<div class="a" style="left:481px;top:431px;width:4px;height:138px;background:linear-gradient(90deg,#2c3a48 0 1px,#4e6072 1px 2.5px,#90a6ba 2.5px 4px)"></div>
<div class="a" style="left:805px;top:351px;width:4px;height:218px;background:linear-gradient(#9aa2aa 0px,#c8d0d8 20px,#e6ecf0 45px,#a8b0b8 70px,#8a9098 110px,#7e868e 160px,#6c7680 218px)"></div>
<div class="a" style="left:808px;top:345px;width:1px;height:224px;background:#3a4048"></div>
<div class="a" style="left:481px;top:566px;width:327px;height:4px;background:linear-gradient(#8fa5b9 0 1px,#4e6072 1px 2.5px,#2c3a48 2.5px 4px)"></div>
<div class="a" style="left:481px;top:357px;width:4px;height:74px;background:linear-gradient(90deg,#d9e6f2,#c3d6e8)"></div>
<div class="t" style="left:485px;top:344px;font-size:7.6px;color:#1a1a1a"><i>拾</i><i>色</i><i>器</i> ( <i>前</i><i>景</i><i>色</i> )</div>
<!-- close button -->
<div class="a" style="left:776px;top:339px;width:29px;height:12px;border:1px solid #7a3020;border-top:none;border-radius:0 0 3px 3px;background:linear-gradient(#e89a8a 0px,#d86a58 5px,#c0321c 6px,#d24a30 11px)"></div>
<svg class="a" style="left:786px;top:341px" width="9" height="8"><path d="M1.5 1L7.5 7M7.5 1L1.5 7" stroke="#333" stroke-width="2.6"/><path d="M1.5 1L7.5 7M7.5 1L1.5 7" stroke="#fff" stroke-width="1.5"/></svg>
<!-- client area -->
<div class="a" style="left:485px;top:357px;width:320px;height:209px;background:#535353;border:1px solid #3e4a55"></div>
<!-- color field -->
<div class="a" style="left:491px;top:376px;width:156px;height:155px;background:linear-gradient(rgba(0,0,0,0),#000),linear-gradient(90deg,#fff,#00aeff)"></div>
<svg class="a" style="left:641px;top:372px" width="10" height="8"><circle cx="5" cy="4" r="3" fill="none" stroke="#fff" stroke-width="1"/><circle cx="5" cy="4" r="2" fill="none" stroke="#222" stroke-width="0.8"/></svg>
<!-- hue slider -->
<div class="a" style="left:654px;top:376px;width:11px;height:156px;background:linear-gradient(#ff0000 0%,#ff00ff 16.7%,#0000ff 33.3%,#00ffff 50%,#00ff00 66.7%,#ffff00 83.3%,#ff0000 100%)"></div>
<svg class="a" style="left:648px;top:443px" width="24" height="8"><path d="M1 0.5L5 4L1 7.5Z" fill="#f0f0f0"/><path d="M23 0.5L19 4L23 7.5Z" fill="#f0f0f0"/></svg>
<!-- new/current -->
<div class="t dl" style="left:683px;top:378px"><i>新</i><i>的</i></div>
<div class="a" style="left:673px;top:387px;width:37px;height:41px;background:#00aeff"></div>
<div class="t dl" style="left:683px;top:430px"><i>当</i><i>前</i></div>
<svg class="a" style="left:714px;top:386px" width="10" height="42" viewBox="0 0 10 42">
<path d="M5 0.5L9.5 8.5H0.5Z" fill="#f0f0f0"/><path d="M5 3V6M5 7V7.8" stroke="#333" stroke-width="1"/>
<rect x="1" y="11" width="8" height="8" fill="#2e9be0" stroke="#bbb" stroke-width="1"/>
<path d="M5 23L9 25V29.5L5 31.5L1 29.5V25ZM1 25L5 27L9 25M5 27V31.5" fill="none" stroke="#eee" stroke-width="1"/>
<rect x="1" y="33.5" width="8" height="8" fill="#00a8ff" stroke="#bbb" stroke-width="1"/>
</svg>
<!-- buttons -->
<div class="a btn" style="top:363px;border:2px solid #d5d5d5"></div>
<div class="t bt" style="top:367px"><i>确</i><i>定</i></div>
<div class="a btn" style="top:385px"></div>
<div class="t bt" style="top:389px"><i>取</i><i>消</i></div>
<div class="a btn" style="top:410px"></div>
<div class="t bt" style="top:414px"><i>添</i><i>加</i><i>到</i><i>色</i><i>板</i></div>
<div class="a btn" style="top:435px"></div>
<div class="t bt" style="top:439px"><i>颜</i><i>色</i><i>库</i></div>
<!-- HSB RGB fields -->
<svg class="a" style="left:672px;top:461px" width="80" height="82" viewBox="0 0 80 82">
<g>
<circle cx="5" cy="5" r="3.8" fill="#f4f4f4"/><circle cx="5" cy="5" r="1.3" fill="#111"/>
<circle cx="5" cy="19" r="3.5" fill="#4a4a4a" stroke="#6a6a6a" stroke-width="0.9"/>
<circle cx="5" cy="33" r="3.5" fill="#4a4a4a" stroke="#6a6a6a" stroke-width="0.9"/>
<circle cx="5" cy="50" r="3.5" fill="#4a4a4a" stroke="#6a6a6a" stroke-width="0.9"/>
<circle cx="5" cy="63.5" r="3.5" fill="#4a4a4a" stroke="#6a6a6a" stroke-width="0.9"/>
<circle cx="5" cy="77.5" r="3.5" fill="#4a4a4a" stroke="#6a6a6a" stroke-width="0.9"/>
<circle cx="71" cy="5" r="3.5" fill="#4a4a4a" stroke="#6a6a6a" stroke-width="0.9"/>
<circle cx="71" cy="19" r="3.5" fill="#4a4a4a" stroke="#6a6a6a" stroke-width="0.9"/>
<circle cx="71" cy="33" r="3.5" fill="#4a4a4a" stroke="#6a6a6a" stroke-width="0.9"/>
</g>
</svg>
<div class="t dl" style="left:685px;top:463px">H:</div><div class="a fld" style="left:698px;top:461px;width:22px"></div><div class="t dv" style="left:701px;top:463px">199</div><div class="t dl" style="left:723px;top:462px"><i>度</i></div>
<div class="t dl" style="left:685px;top:477px">S:</div><div class="a fld" style="left:698px;top:475px;width:22px"></div><div class="t dv" style="left:701px;top:477px">100</div><div class="t dl" style="left:723px;top:477px">%</div>
<div class="t dl" style="left:685px;top:491px">B:</div><div class="a fld" style="left:698px;top:489px;width:22px"></div><div class="t dv" style="left:701px;top:491px">100</div><div class="t dl" style="left:723px;top:491px">%</div>
<div class="t dl" style="left:685px;top:508px">R:</div><div class="a fld" style="left:698px;top:505px;width:22px"></div><div class="t dv" style="left:701px;top:508px">0</div>
<div class="t dl" style="left:685px;top:521px">G:</div><div class="a fld" style="left:698px;top:519px;width:22px"></div><div class="t dv" style="left:701px;top:521px">174</div>
<div class="t dl" style="left:685px;top:535px">B:</div><div class="a fld" style="left:698px;top:533px;width:22px"></div><div class="t dv" style="left:701px;top:535px">255</div>
<div class="t dl" style="left:752px;top:463px">L:</div><div class="a fld" style="left:763px;top:461px;width:27px"></div><div class="t dv" style="left:765px;top:463px">67</div>
<div class="t dl" style="left:752px;top:477px">a:</div><div class="a fld" style="left:763px;top:475px;width:27px"></div><div class="t dv" style="left:765px;top:477px">-16</div>
<div class="t dl" style="left:752px;top:491px">b:</div><div class="a fld" style="left:763px;top:489px;width:27px"></div><div class="t dv" style="left:765px;top:491px">-51</div>
<div class="t dl" style="left:753px;top:508px">C:</div><div class="a fld" style="left:763px;top:505px;width:22px"></div><div class="t dv" style="left:765px;top:508px">70</div><div class="t dl" style="left:789px;top:508px">%</div>
<div class="t dl" style="left:752px;top:521px">M:</div><div class="a fld" style="left:763px;top:519px;width:22px"></div><div class="t dv" style="left:765px;top:521px">19</div><div class="t dl" style="left:789px;top:521px">%</div>
<div class="t dl" style="left:753px;top:535px">Y:</div><div class="a fld" style="left:763px;top:533px;width:22px"></div><div class="t dv" style="left:765px;top:535px">0</div><div class="t dl" style="left:789px;top:535px">%</div>
<div class="t dl" style="left:753px;top:549px">K:</div><div class="a fld" style="left:763px;top:547px;width:22px"></div><div class="t dv" style="left:765px;top:549px">0</div><div class="t dl" style="left:789px;top:549px">%</div>
<div class="t dl" style="left:676px;top:551px">#</div>
<div class="a" style="left:684px;top:549px;width:48px;height:11px;background:#474747;border:1px solid #2e72c8"></div>
<div class="a" style="left:686px;top:551px;width:21px;height:7px;background:#3a8ee6"></div>
<div class="t dv" style="left:686px;top:551px;color:#fff">00aeff</div>
<!-- web only -->
<div class="a" style="left:491px;top:540px;width:8px;height:8px;border:1px solid #777;background:#4a4a4a;border-radius:1px"></div>
<div class="t dl" style="left:504px;top:540px"><i>只</i><i>有</i> Web <i>颜</i><i>色</i></div>
</body></html>
